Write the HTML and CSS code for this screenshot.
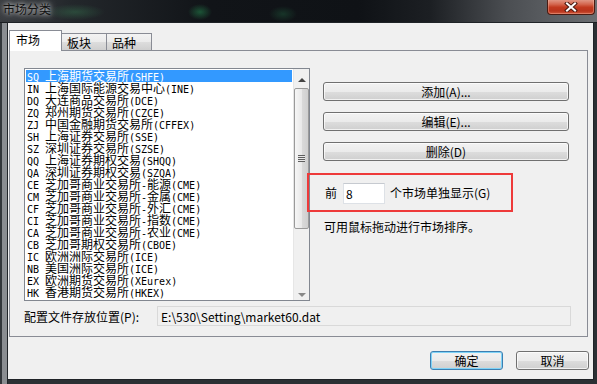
FILE: index.html
```html
<!DOCTYPE html>
<html lang="zh-CN">
  <head>
    <meta charset="UTF-8" />
    <title>市场分类</title>
    <link rel="stylesheet" href="styles.css">
  </head>
  <body>
    <div class="window">
      <div class="titlebar">
        <span class="title">市场分类</span>
        <button class="close" title="关闭">
          <svg width="14" height="10" viewBox="0 0 14 10">
            <path d="M3 1.5 L11 8.5 M11 1.5 L3 8.5" stroke="#4a1b12" stroke-width="4" stroke-linecap="square" />
            <path d="M3 1.5 L11 8.5 M11 1.5 L3 8.5" stroke="#ffffff" stroke-width="2" stroke-linecap="square" />
          </svg>
        </button>
      </div>

      <div class="frame">
        <div class="client">
          <!-- 标签页 -->
          <div class="tabs">
            <div class="tab active">市场</div>
            <div class="tab">板块</div>
            <div class="tab">品种</div>
          </div>

          <div class="panel">
            <div class="top">
              <div class="listbox">
                <ul class="markets">
                  <li class="selected"><span class="code">SQ</span>上海期货交易所<span class="ex">(SHFE)</span></li>
                  <li><span class="code">IN</span>上海国际能源交易中心<span class="ex">(INE)</span></li>
                  <li><span class="code">DQ</span>大连商品交易所<span class="ex">(DCE)</span></li>
                  <li><span class="code">ZQ</span>郑州期货交易所<span class="ex">(CZCE)</span></li>
                  <li><span class="code">ZJ</span>中国金融期货交易所<span class="ex">(CFFEX)</span></li>
                  <li><span class="code">SH</span>上海证券交易所<span class="ex">(SSE)</span></li>
                  <li><span class="code">SZ</span>深圳证券交易所<span class="ex">(SZSE)</span></li>
                  <li><span class="code">QQ</span>上海证券期权交易<span class="ex">(SHQQ)</span></li>
                  <li><span class="code">QA</span>深圳证券期权交易<span class="ex">(SZQA)</span></li>
                  <li><span class="code">CE</span>芝加哥商业交易所<span class="ex">-</span>能源<span class="ex">(CME)</span></li>
                  <li><span class="code">CM</span>芝加哥商业交易所<span class="ex">-</span>金属<span class="ex">(CME)</span></li>
                  <li><span class="code">CF</span>芝加哥商业交易所<span class="ex">-</span>外汇<span class="ex">(CME)</span></li>
                  <li><span class="code">CI</span>芝加哥商业交易所<span class="ex">-</span>指数<span class="ex">(CME)</span></li>
                  <li><span class="code">CA</span>芝加哥商业交易所<span class="ex">-</span>农业<span class="ex">(CME)</span></li>
                  <li><span class="code">CB</span>芝加哥期权交易所<span class="ex">(CBOE)</span></li>
                  <li><span class="code">IC</span>欧洲洲际交易所<span class="ex">(ICE)</span></li>
                  <li><span class="code">NB</span>美国洲际交易所<span class="ex">(ICE)</span></li>
                  <li><span class="code">EX</span>欧洲期货交易所<span class="ex">(XEurex)</span></li>
                  <li><span class="code">HK</span>香港期货交易所<span class="ex">(HKEX)</span></li>
                </ul>
                <div class="scrollbar">
                  <div class="arrow up"></div>
                  <div class="track">
                    <div class="thumb"><span class="grip"></span></div>
                  </div>
                  <div class="arrow down"></div>
                </div>
              </div>

              <div class="side">
                <button class="btn wide">添加(A)...</button>
                <button class="btn wide">编辑(E)...</button>
                <button class="btn wide">删除(D)</button>

                <div class="highlight">
                  <span>前</span>
                  <input class="count" type="text" value="8" />
                  <span>个市场单独显示(G)</span>
                </div>
                <p class="hint">可用鼠标拖动进行市场排序。</p>
              </div>
            </div>

            <div class="path-row">
              <label>配置文件存放位置(P):</label>
              <input class="path" type="text" readonly value="E:\530\Setting\market60.dat" />
            </div>
          </div>

          <div class="actions">
            <button class="btn default">确定</button>
            <button class="btn">取消</button>
          </div>
        </div>
      </div>
    </div>
  </body>
</html>
```

FILE: styles.css
```css
* {
  box-sizing: border-box;
}

body {
  margin: 0;
  background: #1b1e22;
  font-family: "Noto Sans CJK SC", "Liberation Sans", sans-serif;
  font-size: 12px;
  color: #000;
}

.window {
  width: 597px;
  height: 384px;
  display: flex;
  flex-direction: column;
  overflow: hidden;
}

/* 标题栏 */
.titlebar {
  height: 23px;
  display: flex;
  justify-content: space-between;
  align-items: flex-start;
  background:
    radial-gradient(ellipse 30px 8px at 75px 12px, rgba(60, 140, 90, 0.35), transparent),
    radial-gradient(ellipse 12px 8px at 200px 12px, rgba(40, 160, 90, 0.45), transparent),
    radial-gradient(ellipse 14px 8px at 283px 14px, rgba(40, 130, 80, 0.3), transparent),
    linear-gradient(90deg, #3a3d41 0%, #23272b 12%, #111418 35%, #0f1216 60%, #1c1f23 72%, #4b4e52 85%, #6b6e72 100%);
  border-bottom: 1px solid #1a1d20;
}

.title {
  margin: 2px 0 0 3px;
  line-height: 14px;
  font-size: 12px;
  color: #111;
  text-shadow: 0 0 4px rgba(255, 255, 255, 0.8), 0 0 8px rgba(255, 255, 255, 0.6);
}

.close {
  width: 48px;
  height: 16px;
  margin: -1px 2px 0 0;
  padding: 0;
  display: flex;
  align-items: center;
  justify-content: center;
  border: 1px solid #4a1b12;
  border-top: none;
  border-radius: 0 0 4px 4px;
  background: linear-gradient(#e3a08f 0%, #d4674f 35%, #c23a1f 55%, #b8341c 80%, #d0583c 100%);
  box-shadow: inset 0 0 0 1px rgba(255, 200, 180, 0.35);
}

/* 窗口边框与客户区 */
.frame {
  flex: 1;
  padding: 0 4px 5px 8px;
  background: linear-gradient(90deg, #33373b 0, #33373b 2px, #8a8d91 2px, #8a8d91 7px, #1f2327 7px, #1f2327 8px, #2b3034 8px);
}

.client {
  width: 585px;
  height: 356px;
  padding: 7px 0 0 1px;
  background: #f0f0f0;
  box-shadow: 0 0 0 1px #1f2327;
}

/* 标签页 */
.tabs {
  display: flex;
  align-items: flex-end;
  height: 21px;
  position: relative;
  z-index: 1;
}

.tab {
  height: 18px;
  width: 46px;
  margin-left: -1px;
  padding-left: 5px;
  line-height: 17px;
  border: 1px solid #898c95;
  background: linear-gradient(#f3f3f3, #ebebeb 50%, #dddddd 51%, #cfcfcf);
}

.tab.active {
  width: 53px;
  height: 21px;
  margin-left: 0;
  padding-left: 6px;
  line-height: 18px;
  border-bottom: none;
  background: #fff;
}

.panel {
  width: 579px;
  height: 287px;
  margin-top: -1px;
  padding: 17px 0 0 14px;
  border: 1px solid #898c95;
  background: #f0f0f0;
}

.top {
  display: flex;
  align-items: flex-start;
}

/* 市场列表 */
.listbox {
  width: 286px;
  height: 233px;
  display: flex;
  border: 1px solid #828790;
  background: #fff;
}

.markets {
  flex: 1;
  margin: 0;
  padding: 1px;
  list-style: none;
  overflow: hidden;
}

.markets li {
  height: 12px;
  line-height: 12px;
  padding-left: 1px;
  white-space: nowrap;
}

.markets li.selected {
  background: #3399ff;
  color: #fff;
}

.code,
.ex {
  font-family: "DejaVu Sans Mono", "Liberation Mono", monospace;
  font-size: 10px;
}

.code {
  display: inline-block;
  width: 18px;
}

.scrollbar {
  width: 16px;
  display: flex;
  flex-direction: column;
  background: #f0f0f0;
  border-left: 1px solid #e6e6e6;
}

.arrow {
  height: 17px;
  display: flex;
  align-items: center;
  justify-content: center;
}

.arrow::after {
  content: "";
  border-left: 4px solid transparent;
  border-right: 4px solid transparent;
}

.arrow.up::after {
  margin-top: 4px;
  border-bottom: 4px solid #444;
}

.arrow.down::after {
  margin-top: 6px;
  border-top: 4px solid #888;
}

.track {
  flex: 1;
  padding-top: 2px;
}

.thumb {
  height: 141px;
  display: flex;
  align-items: center;
  justify-content: center;
  border: 1px solid #9a9a9a;
  border-radius: 2px;
  background: linear-gradient(90deg, #f6f6f6, #e9e9e9 50%, #dadada 51%, #cfcfcf);
}

.grip {
  width: 7px;
  height: 7px;
  background: repeating-linear-gradient(#5e5e5e 0, #5e5e5e 1px, #e8e8e8 1px, #e8e8e8 2px);
}

/* 右侧操作 */
.side {
  width: 246px;
  margin-left: 13px;
  padding-top: 14px;
  display: flex;
  flex-direction: column;
}

.btn {
  height: 19px;
  padding: 0;
  font-family: inherit;
  font-size: 12px;
  line-height: 16px;
  color: #000;
  border: 1px solid #707070;
  border-radius: 3px;
  background: linear-gradient(#f2f2f2, #ebebeb 50%, #dddddd 51%, #cfcfcf);
  box-shadow: inset 0 0 0 1px rgba(255, 255, 255, 0.7);
}

.btn.wide {
  margin-bottom: 11px;
}

.highlight {
  width: 206px;
  height: 39px;
  margin: 1px 0 0 -16px;
  padding-left: 16px;
  display: flex;
  align-items: center;
  border: 2px solid #ee3a3a;
}

.count {
  width: 42px;
  height: 21px;
  margin: 2px 5px 0 6px;
  padding: 0 2px;
  font-family: inherit;
  font-size: 12px;
  border: 1px solid #dde1e6;
  border-top-color: #c6cad0;
  background: #fff;
  outline: none;
}

.hint {
  margin: 8px 0 0 1px;
  line-height: 14px;
}

/* 配置文件路径 */
.path-row {
  display: flex;
  align-items: center;
  margin-top: 5px;
}

.path-row label {
  width: 133px;
}

.path {
  width: 414px;
  height: 20px;
  padding: 0 3px;
  font-family: inherit;
  font-size: 12px;
  color: #000;
  border: 1px solid #d9d9d9;
  background: #f0f0f0;
  outline: none;
}

/* 底部按钮 */
.actions {
  display: flex;
  justify-content: flex-end;
  gap: 13px;
  margin-top: 14px;
  padding-right: 4px;
}

.actions .btn {
  width: 73px;
}

.btn.default {
  border-color: #3c7fb1;
  box-shadow: inset 0 0 0 1px #7fd3f7;
}
```
